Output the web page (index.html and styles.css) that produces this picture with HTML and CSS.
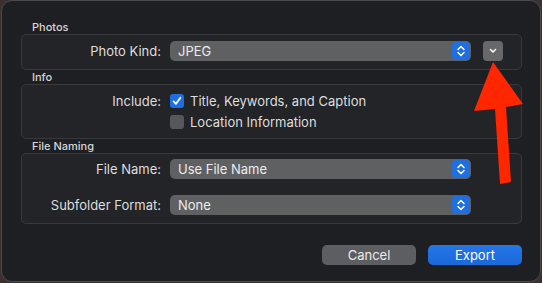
FILE: index.html
```html
<!DOCTYPE html>
<html lang="en">
  <head>
    <meta charset="UTF-8" />
    <title>Export</title>
    <link rel="stylesheet" href="styles.css">
  </head>
  <body>
    <div class="window">
      <div class="group-label">Photos</div>
      <div class="group-box photos-box">
        <div class="field-label">Photo Kind:</div>
        <div class="popup">
          <span>JPEG</span>
          <span class="stepper">
            <svg width="10" height="14" viewBox="0 0 10 14"><path d="M2 5.5 L5 2.5 L8 5.5 M2 8.5 L5 11.5 L8 8.5" fill="none" stroke="#fff" stroke-width="1.5" stroke-linecap="round" stroke-linejoin="round"/></svg>
          </span>
        </div>
        <div class="disclosure">
          <svg width="10" height="8" viewBox="0 0 10 8"><path d="M2.5 2.5 L5 5 L7.5 2.5" fill="none" stroke="#fff" stroke-width="1.6" stroke-linecap="round" stroke-linejoin="round"/></svg>
        </div>
      </div>

      <div class="group-label">Info</div>
      <div class="group-box info-box">
        <div class="field-label">Include:</div>
        <label class="check-row">
          <span class="checkbox checked">
            <svg width="12" height="12" viewBox="0 0 12 12"><path d="M2.6 6.4 L5 8.8 L9.4 2.8" fill="none" stroke="#fff" stroke-width="1.8" stroke-linecap="round" stroke-linejoin="round"/></svg>
          </span>
          Title, Keywords, and Caption
        </label>
        <div></div>
        <div></div>
        <label class="check-row">
          <span class="checkbox"></span>
          Location Information
        </label>
      </div>

      <div class="group-label">File Naming</div>
      <div class="group-box naming-box">
        <div class="field-label">File Name:</div>
        <div class="popup">
          <span>Use File Name</span>
          <span class="stepper">
            <svg width="10" height="14" viewBox="0 0 10 14"><path d="M2 5.5 L5 2.5 L8 5.5 M2 8.5 L5 11.5 L8 8.5" fill="none" stroke="#fff" stroke-width="1.5" stroke-linecap="round" stroke-linejoin="round"/></svg>
          </span>
        </div>
        <div></div>
        <div class="field-label">Subfolder Format:</div>
        <div class="popup">
          <span>None</span>
          <span class="stepper">
            <svg width="10" height="14" viewBox="0 0 10 14"><path d="M2 5.5 L5 2.5 L8 5.5 M2 8.5 L5 11.5 L8 8.5" fill="none" stroke="#fff" stroke-width="1.5" stroke-linecap="round" stroke-linejoin="round"/></svg>
          </span>
        </div>
      </div>

      <div class="button-row">
        <button class="btn">Cancel</button>
        <button class="btn btn-primary">Export</button>
      </div>
    </div>

    <!-- annotation arrow drawn over the dialog -->
    <svg class="arrow" width="542" height="283" viewBox="0 0 542 283">
      <polygon points="493,62 523,104 506,107 511,182 500,184 495,109 474,111" fill="#ff2600"/>
    </svg>
  </body>
</html>
```

FILE: styles.css
```css
:root {
  --outer-bg: #3a302d;
  --window-bg: #1e1f22;
  --window-border: #4b4b4e;
  --box-bg: #232428;
  --box-border: #38393d;
  --text-color: #dedede;
  --popup-bg: #5f6062;
  --accent: #1f6fe0;
}
body {
  margin: 0;
  width: 542px;
  height: 283px;
  background: var(--outer-bg);
  font-family: Inter, "Noto Sans", sans-serif;
  color: var(--text-color);
  position: relative;
  overflow: hidden;
}
.window {
  box-sizing: border-box;
  width: 540px;
  height: 282px;
  margin-left: 1px;
  background: var(--window-bg);
  border: 1px solid var(--window-border);
  border-radius: 11px;
  padding: 19px 18px 0 19px;
}

.group-label {
  font-size: 11px;
  font-weight: 500;
  line-height: 14px;
  padding-left: 11px;
  color: #d6d6d6;
}
.group-box {
  background: var(--box-bg);
  border: 1px solid var(--box-border);
  border-radius: 5px;
  display: grid;
  grid-template-columns: 139px 301px auto;
  column-gap: 9px;
  align-items: center;
}
.photos-box {
  padding: 6px 0 8px;
}
.info-box {
  padding: 6px 0 6px;
  row-gap: 1px;
}
.naming-box {
  padding: 5px 0 8px;
  row-gap: 16px;
}

.field-label {
  font-size: 13px;
  text-align: right;
}

.popup {
  height: 20px;
  border-radius: 5px;
  background: var(--popup-bg);
  display: flex;
  align-items: center;
  justify-content: space-between;
  padding-left: 8px;
  font-size: 13px;
  color: #ececec;
}
.stepper {
  width: 18px;
  height: 18px;
  margin-right: 1px;
  border-radius: 4px;
  background: var(--accent);
  display: flex;
  align-items: center;
  justify-content: center;
}
.disclosure {
  width: 20px;
  height: 20px;
  margin-left: 3px;
  border-radius: 4px;
  background: #68686b;
  display: flex;
  align-items: center;
  justify-content: center;
}

.check-row {
  display: flex;
  align-items: center;
  gap: 6px;
  height: 20px;
  font-size: 13px;
}
.checkbox {
  box-sizing: border-box;
  width: 14px;
  height: 14px;
  border-radius: 3px;
  background: #56575a;
  display: flex;
  align-items: center;
  justify-content: center;
}
.checkbox.checked {
  background: var(--accent);
}

.button-row {
  display: flex;
  justify-content: flex-end;
  gap: 12px;
  margin-top: 21px;
}
.btn {
  width: 94px;
  height: 20px;
  border: none;
  border-radius: 5px;
  background: #5d5e61;
  color: #ececec;
  font-family: Inter, "Noto Sans", sans-serif;
  font-size: 13px;
  padding: 0;
}
.btn-primary {
  background: linear-gradient(#2576e8, #1b68d8);
  color: #fff;
}

.arrow {
  position: absolute;
  left: 0;
  top: 0;
}
```
